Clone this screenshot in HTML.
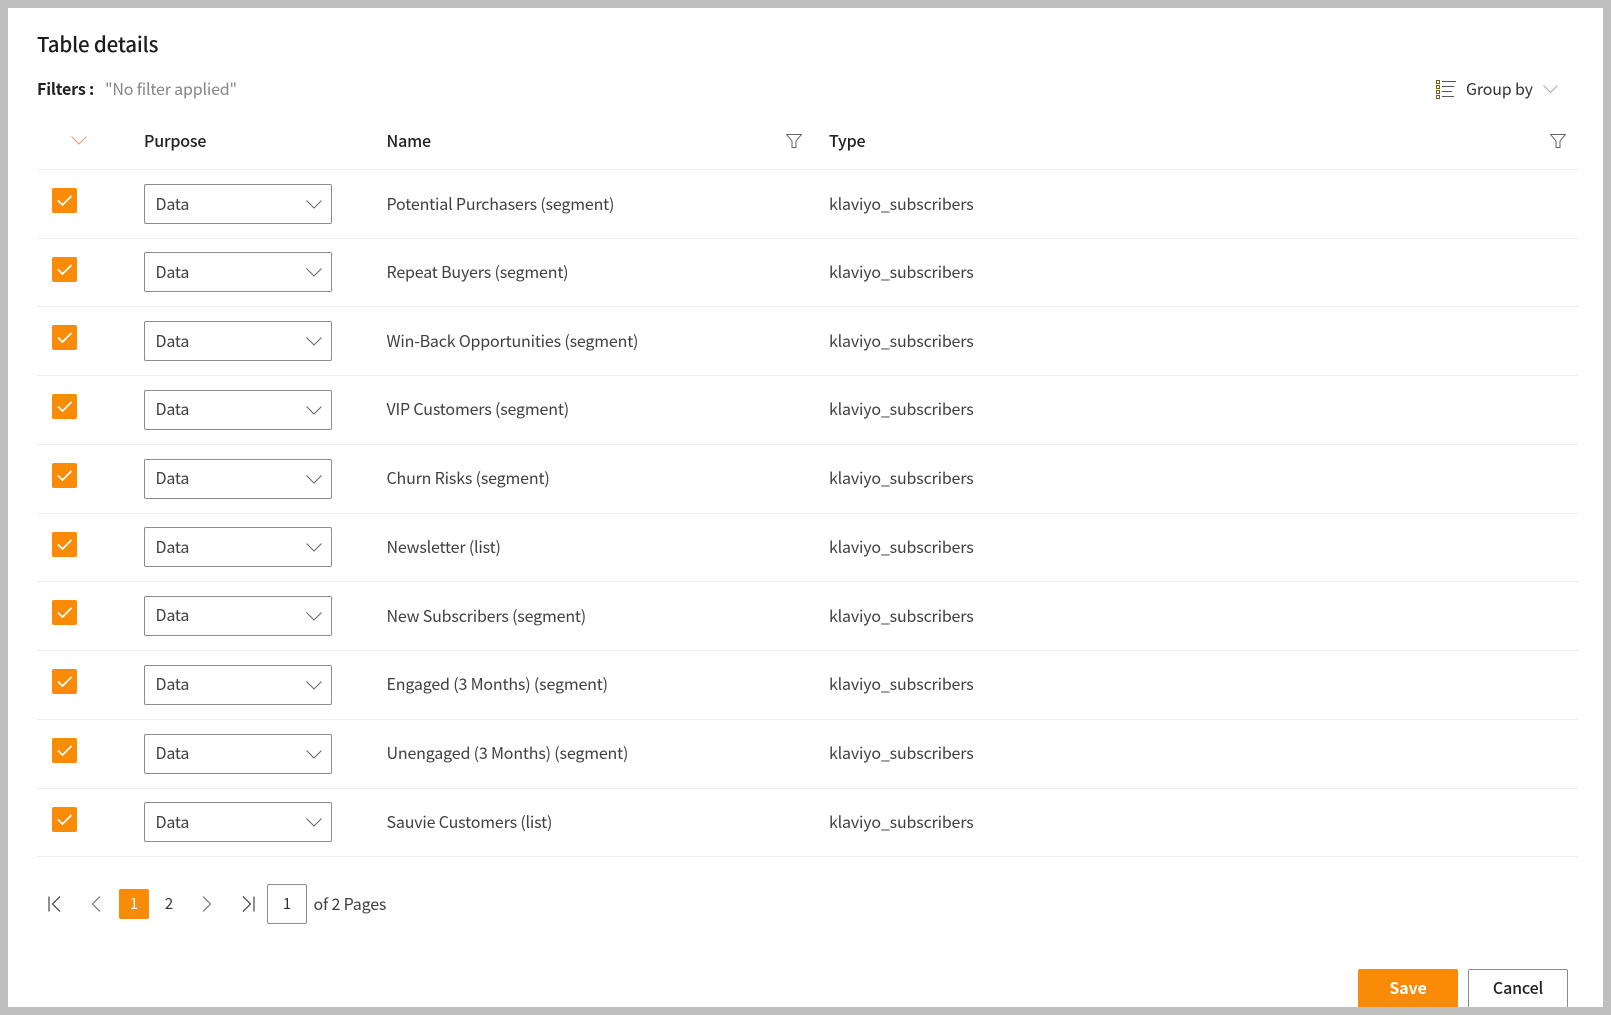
<!DOCTYPE html>
<html lang="en">
<head>
<meta charset="utf-8">
<title>Table details</title>
<style>
html,body{margin:0;padding:0;width:1611px;height:1015px;overflow:hidden;background:#bfbfbf}
body{position:relative;font-family:"Noto Sans CJK JP","Liberation Sans",sans-serif;font-size:16px;color:#404040;letter-spacing:-.17px}
#w{position:absolute;left:8px;top:8px;width:1595px;height:999px;background:#fff;overflow:hidden}
#p{position:absolute;left:-8px;top:-8px;width:1611px;height:1015px}
.a{position:absolute;white-space:nowrap}
.l{position:absolute;left:37px;width:1541px;height:1px;background:#eee}
.r{position:absolute;left:0;width:1611px;height:40px}
.c{position:absolute;left:52px;top:4px;width:25px;height:25px;background:#f98b06;border-radius:2px}
.c svg{position:absolute;left:0;top:0}
.s{position:absolute;left:144px;top:0;width:186px;height:38px;border:1px solid #8c8c8c;border-radius:2px;background:#fff}
.s span{position:absolute;left:10.500px;top:-1px;line-height:38px;color:#404040}
.s svg{position:absolute;left:161px;top:15px}
.n,.t{position:absolute;top:-1px;line-height:40px;white-space:nowrap;color:#404040}
.n{left:386.500px}.t{left:829px}
.h{font-weight:500;color:#222;line-height:24px}
</style>
</head>
<body>
<div id="w"><div id="p">
<div class="a" style="left:37px;top:27px;font-size:20.500px;line-height:32px;font-weight:500;color:#1c1c1c">Table details</div>
<div class="a" style="left:37px;top:76px;line-height:24px;font-weight:700;color:#222">Filters :</div>
<div class="a" style="left:105px;top:76px;line-height:24px;color:#858585">"No filter applied"</div>

<svg class="a" style="left:1436px;top:80px" width="20" height="19" viewBox="0 0 20 19" fill="none">
<rect x=".5" y=".5" width="3" height="3" stroke="#7a5a14"/><rect x=".5" y="5.5" width="3" height="3" stroke="#7a5a14"/><rect x=".5" y="10.5" width="3" height="3" stroke="#7a5a14"/><rect x=".5" y="15.5" width="3" height="3" stroke="#7a5a14"/>
<path d="M6 1.500h14M6 6.500h12M6 11.500h10M6 16.500h12" stroke="#555"/></svg>
<div class="a" style="left:1466px;top:76px;line-height:24px;color:#333">Group by</div>
<svg class="a" style="left:1543px;top:85px" width="15" height="9" viewBox="0 0 15 9" fill="none"><path d="M.5 .5l7 7 7-7" stroke="#aaa"/></svg>

<svg class="a" style="left:71px;top:136px" width="16" height="9" viewBox="0 0 16 9" fill="none"><path d="M.5 .5l7.500 7.500 7.500-7.500" stroke="#f7926a"/></svg>
<div class="a h" style="left:144px;top:128px">Purpose</div>
<div class="a h" style="left:386.500px;top:128px">Name</div>
<div class="a h" style="left:829px;top:128px">Type</div>
<svg class="a" style="left:786px;top:134px" width="16" height="14" viewBox="0 0 16 14" fill="none"><path d="M.5 .5h15l-5.500 6.500v6.500h-4v-6.500z" stroke="#666"/></svg>
<svg class="a" style="left:1550px;top:134px" width="16" height="14" viewBox="0 0 16 14" fill="none"><path d="M.5 .5h15l-5.500 6.500v6.500h-4v-6.500z" stroke="#666"/></svg>

<div class="l" style="top:169px"></div>
<div class="l" style="top:238px"></div>
<div class="l" style="top:306px"></div>
<div class="l" style="top:375px"></div>
<div class="l" style="top:444px"></div>
<div class="l" style="top:513px"></div>
<div class="l" style="top:581px"></div>
<div class="l" style="top:650px"></div>
<div class="l" style="top:719px"></div>
<div class="l" style="top:788px"></div>
<div class="l" style="top:856px"></div>

<div class="r" style="top:184px"><div class="c"><svg width="25" height="25" fill="none"><path d="M6 12.500l4.500 4.500 9-9" stroke="#fff" stroke-width="1.700"/></svg></div><div class="s"><span>Data</span><svg width="16" height="10" fill="none"><path d="M.5 .5l7.500 7.500 7.500-7.500" stroke="#666"/></svg></div><div class="n">Potential Purchasers (segment)</div><div class="t">klaviyo_subscribers</div></div>
<div class="r" style="top:252px"><div class="c" style="top:5px"><svg width="25" height="25" fill="none"><path d="M6 12.500l4.500 4.500 9-9" stroke="#fff" stroke-width="1.700"/></svg></div><div class="s"><span>Data</span><svg width="16" height="10" fill="none"><path d="M.5 .5l7.500 7.500 7.500-7.500" stroke="#666"/></svg></div><div class="n">Repeat Buyers (segment)</div><div class="t">klaviyo_subscribers</div></div>
<div class="r" style="top:321px"><div class="c"><svg width="25" height="25" fill="none"><path d="M6 12.500l4.500 4.500 9-9" stroke="#fff" stroke-width="1.700"/></svg></div><div class="s"><span>Data</span><svg width="16" height="10" fill="none"><path d="M.5 .5l7.500 7.500 7.500-7.500" stroke="#666"/></svg></div><div class="n">Win-Back Opportunities (segment)</div><div class="t">klaviyo_subscribers</div></div>
<div class="r" style="top:390px"><div class="c"><svg width="25" height="25" fill="none"><path d="M6 12.500l4.500 4.500 9-9" stroke="#fff" stroke-width="1.700"/></svg></div><div class="s"><span style="top:-2px">Data</span><svg width="16" height="10" fill="none"><path d="M.5 .5l7.500 7.500 7.500-7.500" stroke="#666"/></svg></div><div class="n" style="top:-2px">VIP Customers (segment)</div><div class="t" style="top:-2px">klaviyo_subscribers</div></div>
<div class="r" style="top:459px"><div class="c"><svg width="25" height="25" fill="none"><path d="M6 12.500l4.500 4.500 9-9" stroke="#fff" stroke-width="1.700"/></svg></div><div class="s"><span style="top:-2px">Data</span><svg width="16" height="10" fill="none"><path d="M.5 .5l7.500 7.500 7.500-7.500" stroke="#666"/></svg></div><div class="n" style="top:-2px">Churn Risks (segment)</div><div class="t" style="top:-2px">klaviyo_subscribers</div></div>
<div class="r" style="top:527px"><div class="c" style="top:5px"><svg width="25" height="25" fill="none"><path d="M6 12.500l4.500 4.500 9-9" stroke="#fff" stroke-width="1.700"/></svg></div><div class="s"><span>Data</span><svg width="16" height="10" fill="none"><path d="M.5 .5l7.500 7.500 7.500-7.500" stroke="#666"/></svg></div><div class="n">Newsletter (list)</div><div class="t">klaviyo_subscribers</div></div>
<div class="r" style="top:596px"><div class="c"><svg width="25" height="25" fill="none"><path d="M6 12.500l4.500 4.500 9-9" stroke="#fff" stroke-width="1.700"/></svg></div><div class="s"><span style="top:-2px">Data</span><svg width="16" height="10" fill="none"><path d="M.5 .5l7.500 7.500 7.500-7.500" stroke="#666"/></svg></div><div class="n">New Subscribers (segment)</div><div class="t">klaviyo_subscribers</div></div>
<div class="r" style="top:665px"><div class="c"><svg width="25" height="25" fill="none"><path d="M6 12.500l4.500 4.500 9-9" stroke="#fff" stroke-width="1.700"/></svg></div><div class="s"><span style="top:-2px">Data</span><svg width="16" height="10" fill="none"><path d="M.5 .5l7.500 7.500 7.500-7.500" stroke="#666"/></svg></div><div class="n" style="top:-2px">Engaged (3 Months) (segment)</div><div class="t" style="top:-2px">klaviyo_subscribers</div></div>
<div class="r" style="top:734px"><div class="c"><svg width="25" height="25" fill="none"><path d="M6 12.500l4.500 4.500 9-9" stroke="#fff" stroke-width="1.700"/></svg></div><div class="s"><span style="top:-2px">Data</span><svg width="16" height="10" fill="none"><path d="M.5 .5l7.500 7.500 7.500-7.500" stroke="#666"/></svg></div><div class="n" style="top:-2px">Unengaged (3 Months) (segment)</div><div class="t" style="top:-2px">klaviyo_subscribers</div></div>
<div class="r" style="top:802px"><div class="c" style="top:5px"><svg width="25" height="25" fill="none"><path d="M6 12.500l4.500 4.500 9-9" stroke="#fff" stroke-width="1.700"/></svg></div><div class="s"><span>Data</span><svg width="16" height="10" fill="none"><path d="M.5 .5l7.500 7.500 7.500-7.500" stroke="#666"/></svg></div><div class="n">Sauvie Customers (list)</div><div class="t">klaviyo_subscribers</div></div>

<svg class="a" style="left:48px;top:896px" width="13" height="16" viewBox="0 0 13 16" fill="none"><path d="M1 .5v15M12 .5l-7.500 7.500 7.500 7.500" stroke="#333" stroke-width="1.100"/></svg>
<svg class="a" style="left:91px;top:896px" width="10" height="16" viewBox="0 0 10 16" fill="none"><path d="M9 .5l-7.500 7.500 7.500 7.500" stroke="#666"/></svg>
<div class="a" style="left:119px;top:889px;width:30px;height:30px;background:#f98b06;border-radius:2px;color:#fff;text-align:center;line-height:30px;font-size:15px">1</div>
<div class="a" style="left:159px;top:889px;width:20px;text-align:center;line-height:30px;font-size:15px;color:#333">2</div>
<svg class="a" style="left:202px;top:896px" width="10" height="16" viewBox="0 0 10 16" fill="none"><path d="M1 .5l7.500 7.500-7.500 7.500" stroke="#666"/></svg>
<svg class="a" style="left:242px;top:896px" width="13" height="16" viewBox="0 0 13 16" fill="none"><path d="M12 .5v15M1 .5l7.500 7.500-7.500 7.500" stroke="#333" stroke-width="1.100"/></svg>
<div class="a" style="left:267px;top:884px;width:38px;height:38px;border:1px solid #8c8c8c;border-radius:2px;text-align:center;line-height:38px;font-size:15px;color:#333">1</div>
<div class="a" style="left:313.500px;top:891px;line-height:24px;color:#404040">of 2 Pages</div>

<div class="a" style="left:1358px;top:969px;width:100px;height:46px;background:#f98b06;border-radius:2px 2px 0 0;color:#fff;font-weight:700;text-align:center;line-height:37px">Save</div>
<div class="a" style="left:1468px;top:969px;width:98px;height:46px;border:1px solid #8c8c8c;border-radius:2px 2px 0 0;color:#222;font-weight:500;text-align:center;line-height:35px">Cancel</div>
</div></div>
</body>
</html>
